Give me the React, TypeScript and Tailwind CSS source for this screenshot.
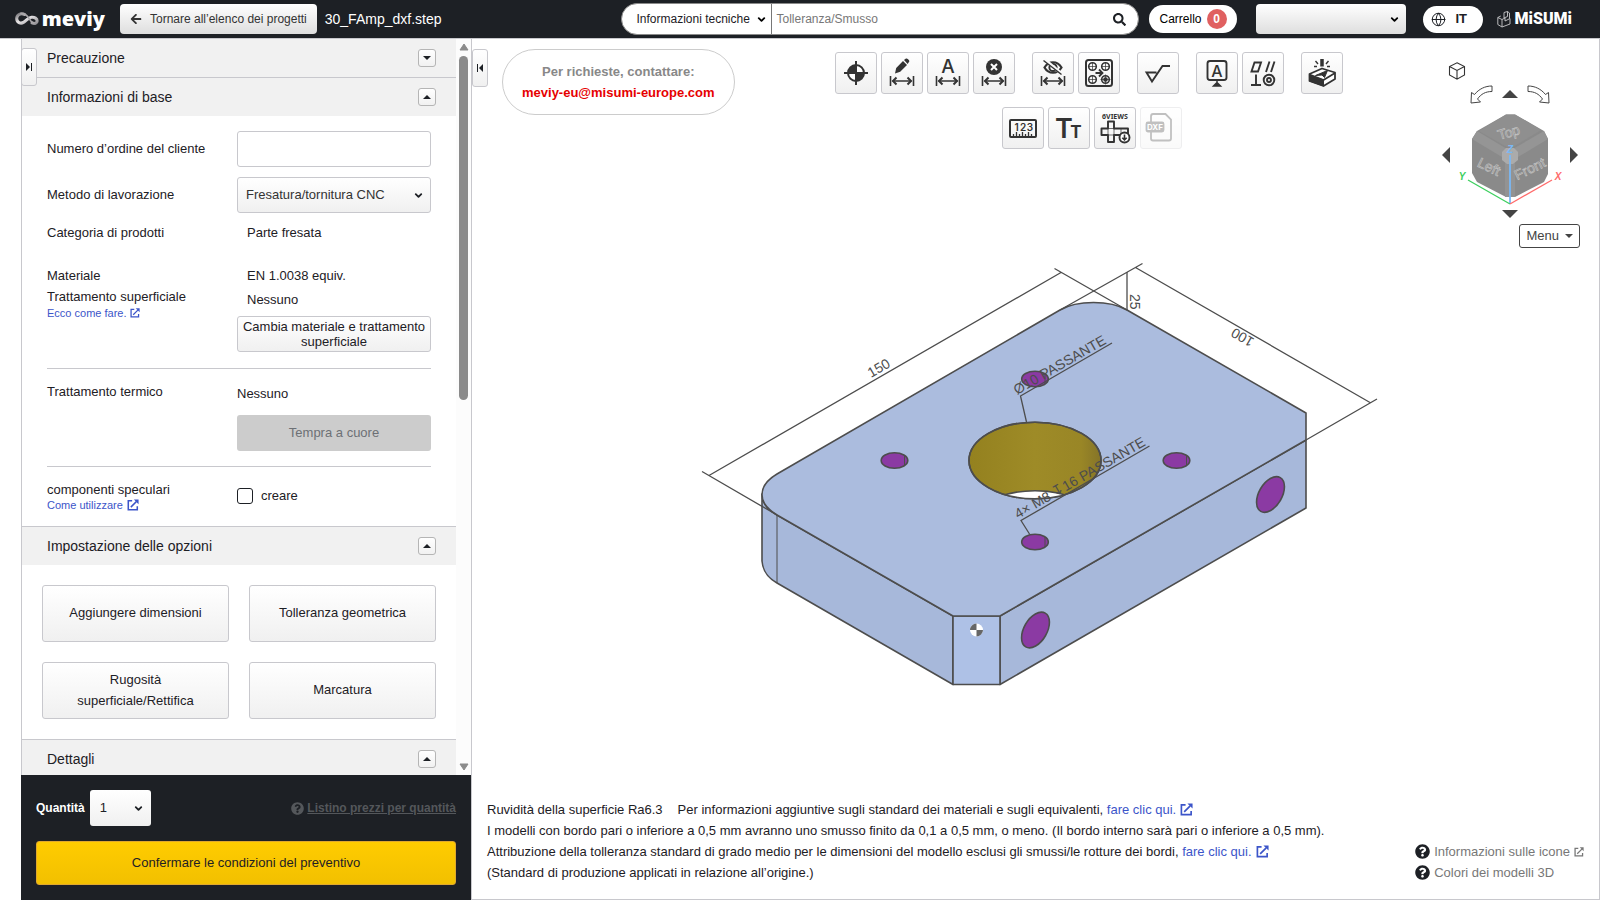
import type { ReactNode } from "react"
import { ChevronDown, Globe } from "lucide-react"
import { FaArrowLeft, FaQuestionCircle, FaSearch } from "react-icons/fa"

const INK = "#333333"
const EDGE = "#4d4d4d"
const PURPLE = "#8b3aa3"

const TOP_FACE =
  "M953 616 L1000 616 L1306 440 L1306 413 L1127 310 C1110 300 1077 300 1060 310 L777 474 C757 486 757 503 777 515 Z"

function MeviyLogo() {
  return (
    <a href="#" className="flex w-[90px] shrink-0 items-center gap-0.5" aria-label="meviy">
      <svg width="29" height="16" viewBox="0 0 29 16" fill="none" aria-hidden>
        <defs>
          <linearGradient id="ribbon" x1="0" y1="0" x2="1" y2="1">
            <stop offset="0" stopColor="#77767a" />
            <stop offset="0.45" stopColor="#e9e6e8" />
            <stop offset="1" stopColor="#8f8d92" />
          </linearGradient>
        </defs>
        <path
          d="M11 2.500C6 .5 2 3.500 2 7.500c0 4.500 4.500 6.500 8 4.500 3.500-2 5-5.500 9.500-6 3.500-.4 6.500 1.600 6.500 4.300 0 2.600-3.200 3.900-6 2.300"
          stroke="url(#ribbon)"
          strokeWidth="3.6"
          strokeLinecap="round"
        />
        <path d="M7 1.500c5-1 7.500 3 9.500 6 1.500 2.500 3 4.500 5.500 5.500" stroke="#a9a6aa" strokeWidth="2" strokeLinecap="round" />
      </svg>
      <span className="font-['Open_Sans',sans-serif] text-[20px] font-extrabold leading-6 text-white">meviy</span>
    </a>
  )
}

function MisumiLogo() {
  return (
    <a href="#" className="flex shrink-0 items-center gap-1 text-white" aria-label="MiSUMi">
      <svg width="14" height="17" viewBox="0 0 14 17" fill="none" stroke="#c9c9cc" strokeWidth="0.9" aria-hidden>
        <path d="M.8 6.500 5 8.500v7.500L.8 13.500ZM5 8.500l3-1.500v3l5-2.500v5.500L5 16M.8 6.500l3-1.500M7 1.500l3.500-1v5L7 7ZM10.500.5l2 1.500v5.500" />
      </svg>
      <span className="font-[Roboto,sans-serif] text-base font-black leading-5">MiSUMi</span>
    </a>
  )
}

function Chevron({ className }: { className: string }) {
  return <ChevronDown className={`pointer-events-none absolute ${className}`} size={11} strokeWidth={4} aria-hidden />
}

function OutLink({ children, size = 12, className }: { children: ReactNode; size?: number; className?: string }) {
  return (
    <a href="#" className={`inline-flex items-center gap-1 ${className ?? "text-[#3c55c9]"}`}>
      {children}
      <svg width={size} height={size} viewBox="0 0 14 14" fill="none" stroke="currentColor" strokeWidth="1.800" aria-hidden>
        <path d="M6 2H1.500V12.500H12V8.500M4.500 9.500 11 3" />
        <path d="M8 .5H13.500V6Z" fill="currentColor" stroke="none" />
      </svg>
    </a>
  )
}

function Triangle({ dir, size = 8 }: { dir: "up" | "down" | "left" | "right"; size?: number }) {
  const paths = {
    up: "M0 8 8 0 16 8Z",
    down: "M0 0H16L8 8Z",
    left: "M8 0V16L0 8Z",
    right: "M0 0V16L8 8Z",
  }
  const flat = dir === "up" || dir === "down"
  return (
    <svg
      width={flat ? size * 2 : size}
      height={flat ? size : size * 2}
      viewBox={flat ? "0 0 16 8" : "0 0 8 16"}
      fill="currentColor"
      aria-hidden
    >
      <path d={paths[dir]} />
    </svg>
  )
}

function ScrollArrow({ up = false }: { up?: boolean }) {
  return (
    <svg width="10" height="8" viewBox="0 0 10 8" fill="currentColor" stroke="currentColor" strokeLinejoin="round" aria-hidden>
      <path d={up ? "M1 7 5 1 9 7Z" : "M1 1H9L5 7Z"} />
    </svg>
  )
}

function Header() {
  return (
    <header className="flex h-[39px] shrink-0 items-center border-b border-[#c8c8cd] bg-[#1d2025] pl-[15px] pr-7">
      <MeviyLogo />
      <button
        type="button"
        className="ml-[15px] flex h-[30px] shrink-0 items-center gap-2 rounded-sm bg-linear-to-b from-white to-[#dedede] px-2.5 text-xs text-[#333]"
      >
        <FaArrowLeft size={12} aria-hidden />
        Tornare all’elenco dei progetti
      </button>
      <h1 className="ml-2 shrink-0 text-sm text-white">30_FAmp_dxf.step</h1>

      <form className="ml-auto flex h-8 w-[518px] min-w-0 items-center rounded-full border border-[#8a8a8a] bg-white">
        <div className="relative flex h-full items-center border-r border-[#777]">
          <select
            aria-label="Ambito di ricerca"
            className="h-full w-[149px] appearance-none bg-transparent pl-[14px] text-xs text-[#1d2025]"
          >
            <option>Informazioni tecniche</option>
          </select>
          <Chevron className="right-1" />
        </div>
        <input
          aria-label="Cerca"
          placeholder="Tolleranza/Smusso"
          className="h-full min-w-0 flex-1 px-1 text-xs placeholder:text-[#777]"
        />
        <button type="button" aria-label="Cerca" className="mr-3 text-[#1d2025]">
          <FaSearch size={13} />
        </button>
      </form>

      <a href="#" className="ml-2.5 flex h-7 shrink-0 items-center gap-[5px] rounded-full bg-white px-2.5 text-xs text-black">
        Carrello
        <span className="flex size-5 items-center justify-center rounded-full bg-[#e06060] font-bold text-white">0</span>
      </a>
      <div className="relative ml-[19px] flex shrink-0 items-center">
        <select
          aria-label="Account"
          className="h-[30px] w-[150px] appearance-none rounded-sm bg-linear-to-b from-white to-[#dedede]"
        />
        <Chevron className="right-[6px]" />
      </div>
      <button
        type="button"
        className="ml-[17px] flex h-[27px] w-[60px] shrink-0 items-center gap-2.5 rounded-full bg-white pl-2 text-[13px] font-bold text-[#1d2025]"
      >
        <Globe size={15} strokeWidth={1.6} aria-hidden />
        IT
      </button>
      <div className="ml-3.5 flex">
        <MisumiLogo />
      </div>
    </header>
  )
}

function SectionHeader({ title, open = true, first = false }: { title: string; open?: boolean; first?: boolean }) {
  return (
    <div className={`flex items-center justify-between bg-[#f1f1f1] pl-[25px] pr-5 ${first ? "" : "border-t border-[#c8c8cd]"}`}>
      <h2 className="text-sm leading-[38px] text-[#1d2025]">{title}</h2>
      <button
        type="button"
        aria-label={title}
        aria-expanded={open}
        className="flex size-[18px] items-center justify-center rounded-[3px] border border-[#b5b5b5] bg-linear-to-b from-white to-[#f1f1f1]"
      >
        <Triangle dir={open ? "up" : "down"} size={4} />
      </button>
    </div>
  )
}

const BOX = "rounded-[3px] border border-[#c8c8cd]"
const SOFT = "bg-linear-to-b from-white to-[#f0f0f0]"

function BasicInfo() {
  return (
    <div className="px-[25px] pb-[15px] pt-[15px] text-[13px] leading-5">
      <div className="grid grid-cols-[190px_1fr] items-center gap-y-2.5">
        <label htmlFor="order">Numero d’ordine del cliente</label>
        <input id="order" className={`h-9 w-full px-2 ${BOX}`} />
        <label htmlFor="method">Metodo di lavorazione</label>
        <div className="relative flex items-center">
          <select id="method" className={`h-9 w-full appearance-none pl-2 text-[#333] ${BOX} ${SOFT}`}>
            <option>Fresatura/tornitura CNC</option>
          </select>
          <Chevron className="right-[7px]" />
        </div>
      </div>

      <div className="mt-2.5 grid grid-cols-[190px_1fr]">
        <span>Categoria di prodotti</span>
        <span className="pl-2.5">Parte fresata</span>
      </div>

      <div className="mt-[22px] grid grid-cols-[190px_1fr]">
        <div className="flex flex-col items-start leading-[21px]">
          <span>Materiale</span>
          <span>Trattamento superficiale</span>
          <span className="flex text-[11px] leading-3">
            <OutLink size={10}>Ecco come fare.</OutLink>
          </span>
        </div>
        <div className="flex flex-col">
          <span className="pl-2.5 leading-[21px]">EN 1.0038 equiv.</span>
          <span className="pl-2.5 pt-0.5 leading-6">Nessuno</span>
          <button type="button" className={`mt-1 h-9 leading-[15px] ${BOX} ${SOFT}`}>
            Cambia materiale e trattamento superficiale
          </button>
        </div>
      </div>

      <hr className="mt-4 border-[#c8c8cd]" />

      <div className="mt-[13px] grid grid-cols-[190px_1fr]">
        <span>Trattamento termico</span>
        <div className="flex flex-col">
          <span className="leading-6">Nessuno</span>
          <button type="button" disabled className="mt-[9px] h-9 rounded-[3px] bg-[#ccc] text-[#6d7075]">
            Tempra a cuore
          </button>
        </div>
      </div>

      <hr className="mt-[15px] border-[#c8c8cd]" />

      <div className="mt-3.5 grid grid-cols-[190px_1fr] items-center">
        <div className="flex flex-col items-start">
          <span className="leading-[18px]">componenti speculari</span>
          <span className="flex text-[11px] leading-3">
            <OutLink>Come utilizzare</OutLink>
          </span>
        </div>
        <label className="flex items-center gap-2">
          <input type="checkbox" className="size-4 appearance-none rounded-[3px] border border-[#1d2025] bg-white" />
          creare
        </label>
      </div>
    </div>
  )
}

const OPTIONS = ["Aggiungere dimensioni", "Tolleranza geometrica", "Rugosità superficiale/Rettifica", "Marcatura"]

function Sidebar() {
  return (
    <aside className="relative flex w-[451px] shrink-0 flex-col border-r border-[#c8c8cd] text-[#1d2025]">
      <div className="flex min-h-0 flex-1">
        <div className="min-w-0 flex-1 overflow-hidden border-l border-[#c8c8cd]">
          <SectionHeader title="Precauzione" open={false} first />
          <SectionHeader title="Informazioni di base" />
          <BasicInfo />
          <SectionHeader title="Impostazione delle opzioni" />
          <div className="grid grid-cols-2 gap-5 p-5 text-[13px] leading-[21px]">
            {OPTIONS.map((name) => (
              <button key={name} type="button" className={`h-[57px] px-5 pb-0.5 ${BOX} ${SOFT}`}>
                {name}
              </button>
            ))}
          </div>
          <SectionHeader title="Dettagli" />
        </div>
        <div className="flex w-[15px] flex-col items-center bg-[#fcfcfc] py-1 text-[#8b8b8b]" aria-hidden>
          <ScrollArrow up />
          <div className="my-[5px] flex w-[9px] flex-1 flex-col">
            <div className="h-[49%] rounded-full bg-[#8b8b8b]" />
          </div>
          <ScrollArrow />
        </div>
      </div>

      <div className="bg-[#1d2025] p-[15px]">
        <div className="flex items-center justify-between text-xs font-bold">
          <div className="flex items-center gap-[5px]">
            <label htmlFor="qty" className="text-white">
              Quantità
            </label>
            <div className="relative flex items-center">
              <select
                id="qty"
                className="h-9 w-[61px] appearance-none rounded-[3px] bg-linear-to-b from-white to-[#f0f0f0] pl-2.5 text-[13px] font-normal"
              >
                <option>1</option>
              </select>
              <Chevron className="right-[7px]" />
            </div>
          </div>
          <a href="#" className="flex items-center gap-[3px] text-[#54575b]">
            <FaQuestionCircle size={13} aria-hidden />
            <span className="underline">Listino prezzi per quantità</span>
          </a>
        </div>
        <button
          type="button"
          className="mt-[15px] h-11 w-full rounded-[3px] border border-[#e0a82e] bg-linear-to-b from-[#ffcc00] to-[#f2c000] text-[13px]"
        >
          Confermare le condizioni del preventivo
        </button>
      </div>

      <button
        type="button"
        aria-label="Espandi il pannello"
        className={`absolute left-0 top-[9px] flex h-[38px] w-4 items-center justify-center gap-px ${BOX} ${SOFT}`}
      >
        <Triangle dir="right" size={4} />
        <span className="h-2 w-px bg-[#1d2025]" />
      </button>
    </aside>
  )
}

/* ---- toolbar icons, drawn on the 42px button box ---- */

function DimensionBar() {
  return (
    <g stroke={INK} strokeWidth="1.6" fill="none">
      <path d="M9.500 24V34M32.500 24V34M11.500 29H30.500" />
      <path d="M15.500 25.500 12 29l3.500 3.500M26.500 25.500 30 29l-3.500 3.500" strokeWidth="2" />
    </g>
  )
}

function LetterA({ x, y, size }: { x: number; y: number; size: number }) {
  return (
    <text x={x} y={y} fontFamily="Inter, sans-serif" fontSize={size} fontWeight="500" textAnchor="middle" fill={INK}>
      A
    </text>
  )
}

const ICONS: Record<string, ReactNode> = {
  origin: (
    <g stroke={INK} strokeWidth="2">
      <circle cx="21" cy="21" r="8" fill="#fff" />
      <path d="M21 21V13a8 8 0 0 0-8 8ZM21 21v8a8 8 0 0 0 8-8Z" fill={INK} stroke="none" />
      <path d="M21 9V33M9 21H33" />
    </g>
  ),
  editDim: (
    <>
      <path d="M14 21.500l1.200-5.500L22 9l4 4-6.800 6.800ZM23 8l1.600-1.300c.7-.5 1.600-.4 2.200.2l1 1c.6.600.700 1.500.1 2.200L26.700 12Z" fill={INK} />
      <DimensionBar />
    </>
  ),
  autoDim: (
    <>
      <LetterA x={21} y={21} size={19} />
      <DimensionBar />
    </>
  ),
  deleteDim: (
    <>
      <circle cx="21" cy="15" r="8" fill={INK} />
      <path d="M18 12l6 6M24 12l-6 6" stroke="#fff" strokeWidth="2" />
      <DimensionBar />
    </>
  ),
  hideDim: (
    <>
      <path d="M12.500 15.500c4-7 13-7 17 0-4 7-13 7-17 0Z" fill="none" stroke={INK} strokeWidth="2.2" />
      <circle cx="21" cy="15.500" r="3.600" fill="none" stroke={INK} strokeWidth="2" />
      <path d="M12.500 7.500 30 22" stroke="#fafafa" strokeWidth="3" />
      <path d="M11.500 8.500 29.500 22.500" stroke={INK} strokeWidth="1.5" />
      <DimensionBar />
    </>
  ),
  holes: (
    <g fill="none" stroke={INK} strokeWidth="1.6">
      <rect x="8" y="8" width="26" height="26" rx="2.500" strokeWidth="2" />
      <circle cx="14.500" cy="14.500" r="3.800" />
      <circle cx="27.500" cy="14.500" r="3.800" />
      <circle cx="14.500" cy="27.500" r="3.800" />
      <circle cx="27.500" cy="27.500" r="3.800" />
      <path
        d="M14.500 10v9M10 14.500h9M27.500 10v9M23 14.500h9M14.500 23v9M10 27.500h9M27.500 22.500v10M22.500 27.500h10"
        strokeWidth="0.700"
      />
      <circle cx="27.500" cy="27.500" r="1.500" fill={INK} />
      <path d="M17.500 21h6.500M21 17.500l3.500 3.500-3.500 3.500" strokeWidth="1.800" />
    </g>
  ),
  roughness: <path d="M19.500 20.500H9.500L15 29.500 25.500 14H33" fill="none" stroke={INK} strokeWidth="1.9" />,
  datum: (
    <>
      <rect x="11.500" y="9" width="19" height="19" rx="2.500" fill="none" stroke={INK} strokeWidth="1.9" />
      <LetterA x={21} y={24.5} size={16} />
      <path d="M21 28v4M17.500 34h7L21 30.500Z" fill={INK} stroke={INK} strokeWidth="1.5" />
    </>
  ),
  geometric: (
    <g fill="none" stroke={INK} strokeWidth="1.9">
      <path d="M12.500 10.500h6.500L16 19.500H9.500ZM27.500 9.500 24 20M32.500 9.500 29 20M14 22.500V33M9 33h10" />
      <circle cx="27" cy="28" r="5.300" />
      <circle cx="27" cy="28" r="2" />
    </g>
  ),
  marking: (
    <g stroke={INK} strokeLinejoin="round">
      <path d="M8.500 22 21 16.500 34 20.500v6.500L22.500 34 8.500 29Z" fill="#fff" strokeWidth="1.8" />
      <path d="M8.500 23 22.500 28V34L8.500 29Z" fill={INK} strokeWidth="1" />
      <path d="M8.500 22.500 22.500 28 34 21" fill="none" strokeWidth="1.800" />
      <path d="M14.500 23.500 26.500 18.500 23.500 25.500 21 23Z" fill={INK} />
      <path d="M21 7v7.500" strokeWidth="3.500" strokeLinejoin="miter" />
      <path d="M14.500 9l2.500 3M27.500 9 25 12M13 14.500h3M29 14.500h-3" strokeWidth="1.4" />
    </g>
  ),
  ruler: (
    <g fill="none" stroke={INK} strokeWidth="2">
      <rect x="8" y="13" width="26" height="17" rx="1" />
      <path d="M11.500 30v-3M14.500 30v-5M17.500 30v-3M20.500 30v-5M23.500 30v-3M26.500 30v-5M29.500 30v-3" strokeWidth="1.300" />
      <g fontFamily="Inter, sans-serif" fontSize="10" fontWeight="600" textAnchor="middle" fill={INK} stroke="none">
        <text x="14.500" y="23.500">1</text>
        <text x="21" y="23.500">2</text>
        <text x="28" y="23.500">3</text>
      </g>
    </g>
  ),
  textSize: (
    <g fill={INK} fontFamily="Inter, sans-serif" fontWeight="600" textAnchor="middle">
      <text x="16" y="31" fontSize="27">
        T
      </text>
      <text x="28" y="31" fontSize="17" fontWeight="700">
        T
      </text>
    </g>
  ),
  sixViews: (
    <g fill="none" stroke={INK} strokeWidth="1.9">
      <text
        x="21"
        y="11.500"
        fontFamily="'Noto Sans', sans-serif"
        fontSize="7"
        fontWeight="700"
        textAnchor="middle"
        fill={INK}
        stroke="none"
      >
        6VIEWS
      </text>
      <path d="M14 14.500h6v7h14v6.500h-14v7h-6v-7h-6.500v-6.500H14Z" strokeLinejoin="round" />
      <path d="M14 21.500h6v6.500h-6ZM27 21.500v6.500" strokeWidth="0.700" />
      <circle cx="30.500" cy="30.500" r="5" fill="#fff" />
      <path d="M30.500 27.500v5M28.300 30.700l2.200 2.200 2.200-2.200" strokeWidth="1.600" />
    </g>
  ),
  dxf: (
    <g fill="none" stroke="#333" strokeWidth="1.8">
      <path d="M11 15V9.500Q11 7 13 7H25.500L31 12.500V31.500Q31 33.500 29 33.500H13Q11 33.500 11 31.500V25" />
      <rect x="6.500" y="15.500" width="17" height="9" rx="1.500" fill="#333" />
      <text x="15" y="23" fontFamily="Inter, sans-serif" fontSize="8" fontWeight="700" textAnchor="middle" fill="#fff" stroke="none">
        DXF
      </text>
    </g>
  ),
}

const TOOL_ROWS = [
  [["origin", "editDim", "autoDim", "deleteDim"], ["hideDim", "holes"], ["roughness"], ["datum", "geometric"], ["marking"]],
  [["ruler", "textSize", "sixViews", "dxf"]],
]

function Toolbar() {
  return (
    <div className="flex flex-1 flex-col items-center gap-[13px] pl-1 pt-[13px]">
      {TOOL_ROWS.map((groups, row) => (
        <div key={row} className="flex gap-[17px] last:pl-1.5">
          {groups.map((group) => (
            <div key={group[0]} className="flex gap-1">
              {group.map((name) => (
                <button
                  key={name}
                  type="button"
                  aria-label={name}
                  disabled={name === "dxf"}
                  className={`size-[42px] disabled:opacity-30 ${BOX} ${SOFT}`}
                >
                  <svg width="40" height="40" viewBox="1 1 40 40" aria-hidden>
                    {ICONS[name]}
                  </svg>
                </button>
              ))}
            </div>
          ))}
        </div>
      ))}
    </div>
  )
}

function CurvedArrow({ flip = false }: { flip?: boolean }) {
  return (
    <svg width="23" height="19" viewBox="0 0 23 19" fill="#fff" stroke="#444" strokeWidth="1" aria-hidden>
      <path
        d={
          flip
            ? "M1 1C8 1 14 4 18.500 9.500L21.500 7.500 22 18 12.500 17 15.500 14C12 9 7.500 6.500 1 6.500Z"
            : "M22 1C15 1 9 4 4.500 9.500L1.500 7.500 1 18 10.500 17 7.500 14C11 9 15.500 6.500 22 6.500Z"
        }
      />
    </svg>
  )
}

function OrientationCube() {
  return (
    <svg width="104" height="102" viewBox="1457 104 104 102" fontFamily="'Liberation Sans', sans-serif" aria-hidden>
      <path d="M1505 114.500h9L1543 131l4 8v35l-4 8-29 15h-9l-29-15-5-9v-34l5-8Z" fill="#8a8a8a" />
      <path d="M1505 114.500h9L1540 130 1512 147h-6L1478 131Z" fill="#8f8f8f" />
      <path d="M1476 131 1471 139 1501 157 1506 149ZM1543 131l4 8-30 18-5-8Z" fill="#959595" />
      <path d="M1504 161v36h10v-36Z" fill="#939393" />
      <path d="M1505 148h8l4 4v8l-5 4h-6l-5-4v-8Z" fill="#ababab" />
      <g fill="#8a8a8a" stroke="#c4c4c4" strokeWidth="0.600" fontSize="14" textAnchor="middle">
        <text transform="translate(1509 137) rotate(-16)">Top</text>
        <text transform="translate(1486 171) rotate(26)">Left</text>
        <text transform="translate(1531 173) rotate(-26)">Front</text>
      </g>
      <path d="M1509 155V204" stroke="#7ab8f5" strokeWidth="1.8" />
      <path d="M1509 204 1467 180" stroke="#3ccf5e" strokeWidth="1.3" />
      <path d="M1509 204 1551 180" stroke="#ff6b6b" strokeWidth="1.3" />
      <g fontSize="10" fontWeight="700" fontStyle="italic" textAnchor="middle">
        <text x="1509" y="153" fill="#7ab8f5">
          Z
        </text>
        <text x="1461" y="180" fill="#3ccf5e">
          Y
        </text>
        <text x="1557" y="180" fill="#ff6b6b">
          X
        </text>
      </g>
    </svg>
  )
}

function ViewPanel() {
  return (
    <div className="mr-[19px] flex w-[140px] shrink-0 flex-col pt-[23px] text-[#444]">
      <button type="button" aria-label="Vista iniziale" className="ml-2 self-start">
        <svg width="18" height="18" viewBox="0 0 18 18" fill="none" stroke="#333" strokeWidth="1.1" aria-hidden>
          <path d="M9 .8 16.500 4.500v8.500L9 17.200 1.500 13V4.500ZM1.500 4.500 9 8.500l7.500-4M9 8.500v8.700" />
        </svg>
      </button>
      <div className="mt-1 flex h-5 items-center justify-center gap-[9px]">
        <button type="button" aria-label="Ruota a sinistra">
          <CurvedArrow />
        </button>
        <button type="button" aria-label="Su">
          <Triangle dir="up" />
        </button>
        <button type="button" aria-label="Ruota a destra">
          <CurvedArrow flip />
        </button>
      </div>
      <div className="flex items-center justify-between px-0.5">
        <button type="button" aria-label="Sinistra">
          <Triangle dir="left" />
        </button>
        <OrientationCube />
        <button type="button" aria-label="Destra">
          <Triangle dir="right" />
        </button>
      </div>
      <button type="button" aria-label="Giù" className="mt-1 self-center">
        <Triangle dir="down" />
      </button>
      <button
        type="button"
        className="mt-1.5 flex h-6 items-center gap-1.5 self-end rounded-[3px] border border-[#444] px-1.5 text-[13px]"
      >
        Menu
        <Triangle dir="down" size={4} />
      </button>
    </div>
  )
}

function SmallHole({ cx, cy }: { cx: number; cy: number }) {
  return (
    <g>
      <ellipse cx={cx} cy={cy} rx="13.300" ry="7.800" fill={PURPLE} />
      <path d={`M${cx + 10} ${cy - 5}v10`} strokeWidth="1" />
    </g>
  )
}

function PartModel() {
  return (
    <svg
      className="w-full max-w-[692px]"
      viewBox="690 255 692 440"
      fontFamily="'Liberation Sans', sans-serif"
      role="img"
      aria-label="Modello 3D"
    >
      <defs>
        <clipPath id="bore">
          <ellipse cx="1035" cy="460.500" rx="66" ry="38.300" />
        </clipPath>
        <linearGradient id="brass">
          <stop offset="0" stopColor="#94811f" />
          <stop offset="0.500" stopColor="#9e8b27" />
          <stop offset="0.850" stopColor="#998626" />
          <stop offset="1" stopColor="#857428" />
        </linearGradient>
      </defs>

      <g stroke={EDGE} strokeWidth="1.6" strokeLinejoin="round">
        <path d="M762 494V561C763 572 768 578 777 583L953 684.500V616L777 515C768 510 762 503 762 494Z" fill="#a7b8da" />
        <path d="M1000 616 1306 440V508L1000 684.500Z" fill="#a7b8da" />
        <path d="M953 616h47v68.500h-47Z" fill="#aec1e6" />
        <path d={TOP_FACE} fill="#abbcde" />
        <path d="M777 515V583" strokeWidth="1" />

        <ellipse cx="1035" cy="460.500" rx="66" ry="38.300" fill="url(#brass)" />
        <ellipse cx="1035" cy="529" rx="66" ry="38.300" fill="#fff" clipPath="url(#bore)" />
        <ellipse cx="1035" cy="460.500" rx="66" ry="38.300" fill="none" />

        <SmallHole cx={894.5} cy={460.5} />
        <SmallHole cx={1035} cy={379} />
        <SmallHole cx={1176.5} cy={460.5} />
        <SmallHole cx={1035} cy={542} />
        <ellipse rx="19.500" ry="11.500" transform="translate(1035.500 630) rotate(-60)" fill={PURPLE} />
        <ellipse rx="19.500" ry="11.500" transform="translate(1270.500 494.500) rotate(-60)" fill={PURPLE} />
      </g>

      <circle cx="976.500" cy="630" r="6.500" fill="#fff" />
      <path d="M976.500 630v-6.500a6.500 6.500 0 0 0-6.500 6.500ZM976.500 630v6.500a6.500 6.500 0 0 0 6.500-6.500Z" fill="#666" />

      <g stroke={EDGE} strokeWidth="1.3" fill="none">
        <path d="M709 475.500 1061 272.500M702 471.500 777 515M1054.500 268.500 1127 310" />
        <path d="M1135.500 267.500 1370 402.500M1142.500 263.500 1060 310M1377 399 1306 440" />
        <path d="M1127 272V310" />
        <path d="M1112 343 1020.500 396 1026.500 422M1149.500 446 1021 520.500 1029.500 534" />
      </g>

      <g fill={EDGE} fontSize="14">
        <text transform="translate(871 378) rotate(-30)">150</text>
        <text transform="translate(1255 339) rotate(210)">100</text>
        <text transform="translate(1130 294) rotate(90)">25</text>
        <text transform="translate(1017 395) rotate(-30)">Ø10 PASSANTE</text>
        <text transform="translate(1018 519) rotate(-30)">4× M8 ↧16 PASSANTE</text>
      </g>
    </svg>
  )
}

function Viewer() {
  return (
    <main className="flex min-w-0 flex-1 flex-col border-b border-r border-[#c8c8cd]">
      <div className="flex items-start">
        <button
          type="button"
          aria-label="Chiudi il pannello"
          className={`mt-2.5 flex h-[38px] w-4 shrink-0 items-center justify-center gap-px text-[#1d2025] ${BOX} ${SOFT}`}
        >
          <span className="h-2 w-px bg-[#1d2025]" />
          <Triangle dir="left" size={4} />
        </button>
        <div className="ml-3.5 mt-2.5 shrink-0 rounded-full border border-[#ccc] px-[19px] py-[11px] text-center text-[13px] font-bold leading-[21px] text-[#888]">
          <p>Per richieste, contattare:</p>
          <a href="mailto:meviy-eu@misumi-europe.com" className="block text-[#e60000]">
            meviy-eu@misumi-europe.com
          </a>
        </div>
        <Toolbar />
        <ViewPanel />
      </div>

      <div className="mt-[7px] flex min-h-0 flex-1 items-start justify-center">
        <PartModel />
      </div>

      <footer className="flex items-end justify-between px-[15px] pb-4 text-[13px] leading-[21px] text-[#1d2025]">
        <div>
          <p>
            Ruvidità della superficie Ra6.3
            <span className="ml-[15px]">Per informazioni aggiuntive sugli standard dei materiali e sugli equivalenti, </span>
            <OutLink size={13}>fare clic qui.</OutLink>
          </p>
          <p>
            I modelli con bordo pari o inferiore a 0,5 mm avranno uno smusso finito da 0,1 a 0,5 mm, o meno. (Il bordo interno
            sarà pari o inferiore a 0,5 mm).
          </p>
          <p>
            Attribuzione della tolleranza standard di grado medio per le dimensioni del modello esclusi gli smussi/le rotture
            dei bordi, <OutLink size={13}>fare clic qui.</OutLink>
          </p>
          <p>(Standard di produzione applicati in relazione all’origine.)</p>
        </div>
        <ul className="shrink-0 text-[#777]">
          <li className="flex items-center gap-1">
            <FaQuestionCircle size={15} className="text-[#1d2025]" aria-hidden />
            <OutLink size={10} className="text-[#777]">
              Informazioni sulle icone
            </OutLink>
          </li>
          <li className="flex items-center gap-1">
            <FaQuestionCircle size={15} className="text-[#1d2025]" aria-hidden />
            <a href="#">Colori dei modelli 3D</a>
          </li>
        </ul>
      </footer>
    </main>
  )
}

export default function App() {
  return (
    <div className="flex h-screen flex-col bg-white font-['Liberation_Sans',Arial,sans-serif]">
      <Header />
      <div className="flex min-h-0 flex-1 pl-[21px]">
        <Sidebar />
        <Viewer />
      </div>
    </div>
  )
}
